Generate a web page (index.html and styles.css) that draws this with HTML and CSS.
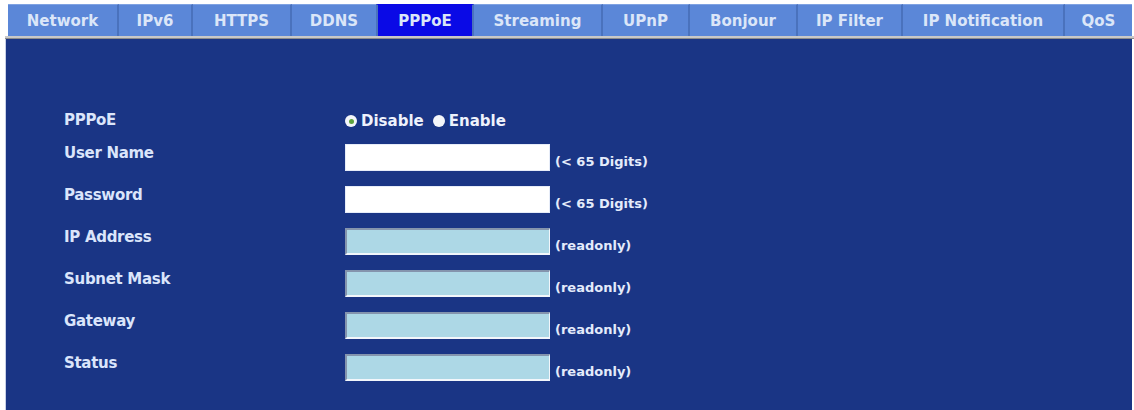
FILE: index.html
```html
<!DOCTYPE html>
<html lang="en">
<head>
  <meta charset="UTF-8" />
  <title>PPPoE</title>
  <link rel="stylesheet" href="styles.css">
</head>
<body>

  <div class="tabs">
    <div class="tab">Network</div>
    <div class="tab">IPv6</div>
    <div class="tab">HTTPS</div>
    <div class="tab">DDNS</div>
    <div class="tab active">PPPoE</div>
    <div class="tab">Streaming</div>
    <div class="tab">UPnP</div>
    <div class="tab">Bonjour</div>
    <div class="tab">IP Filter</div>
    <div class="tab">IP Notification</div>
    <div class="tab">QoS</div>
  </div>
  <div class="rule"></div>

  <div class="panel">
    <div class="form">
      <div class="row first">
        <div class="label">PPPoE</div>
        <div class="radios">
          <span class="radio checked"></span><span class="opt">Disable</span>
          <span class="radio"></span><span class="opt">Enable</span>
        </div>
      </div>
      <div class="row">
        <div class="label">User Name</div>
        <input class="field" type="text">
        <span class="hint">(&lt; 65 Digits)</span>
      </div>
      <div class="row">
        <div class="label">Password</div>
        <input class="field" type="password">
        <span class="hint">(&lt; 65 Digits)</span>
      </div>
      <div class="row">
        <div class="label">IP Address</div>
        <input class="field readonly" type="text" readonly>
        <span class="hint">(readonly)</span>
      </div>
      <div class="row">
        <div class="label">Subnet Mask</div>
        <input class="field readonly" type="text" readonly>
        <span class="hint">(readonly)</span>
      </div>
      <div class="row">
        <div class="label">Gateway</div>
        <input class="field readonly" type="text" readonly>
        <span class="hint">(readonly)</span>
      </div>
      <div class="row">
        <div class="label">Status</div>
        <input class="field readonly" type="text" readonly>
        <span class="hint">(readonly)</span>
      </div>
    </div>
  </div>

</body>
</html>
```

FILE: styles.css
```css
* { box-sizing: border-box; }
body {
  margin: 0;
  background: #fff;
  font-family: 'DejaVu Sans', Verdana, sans-serif;
  font-weight: bold;
  height: 410px;
  overflow: hidden;
}
.tabs {
  display: grid;
  grid-template-columns: 111px 74px 99px 86px 96px 129px 87px 108px 105px 162px 67px;
  margin: 4px 0 0 8px;
  height: 32px;
}
.tab {
  background: #5b87d8;
  color: #dbe6f8;
  font-size: 15px;
  display: flex;
  align-items: center;
  justify-content: center;
  border-right: 2px solid #4a72bd;
  border-top: 1px solid #7fa2e2;
}
.tab:last-child {
  border-right: none;
}
.tab.active {
  background: #0a0ae6;
  border-top-color: #0a0ae6;
  border-left: 2px solid #4a72bd;
  margin-left: -2px;
}
.rule {
  margin-left: 5px;
  height: 3px;
  background: #c9c9c9;
  border-bottom: 1px solid #8d8d8d;
}
.panel {
  margin: 0 2px 0 5px;
  height: 371px;
  background: #1a3585;
  border-left: 1px solid #c8d0e6;
}
.form {
  padding: 72px 0 0 58px;
  display: flex;
  flex-direction: column;
  gap: 15px;
}
.row {
  display: flex;
  align-items: flex-start;
  height: 27px;
}
.row.first {
  height: 18px;
}
.label {
  width: 281px;
  color: #dbe5fb;
  font-size: 15px;
  letter-spacing: -0.3px;
  line-height: 18px;
}
.radios {
  display: flex;
  align-items: center;
  color: #eef2fc;
  font-size: 15px;
  line-height: 18px;
  padding-top: 1px;
}
.radio {
  width: 12px;
  height: 12px;
  border-radius: 50%;
  background: #f4f6fa;
  margin-right: 4px;
  display: inline-flex;
  align-items: center;
  justify-content: center;
}
.radio.checked::after {
  content: "";
  width: 5px;
  height: 5px;
  border-radius: 50%;
  background: #5ea33d;
}
.opt {
  margin-right: 9px;
}
.field {
  width: 205px;
  height: 27px;
  margin: 0;
  padding: 0;
  background: #fff;
  border: 1px solid #e6ecf8;
  outline: none;
}
.field.readonly {
  background: #add8e6;
  border-style: solid;
  border-width: 2px 1px 2px 2px;
  border-color: #8494ad #f2f6fb #f2f6fb #8494ad;
}
.hint {
  align-self: flex-end;
  margin: 0 0 1px 5px;
  color: #e4ebfb;
  font-size: 13px;
  line-height: 17px;
}
```
